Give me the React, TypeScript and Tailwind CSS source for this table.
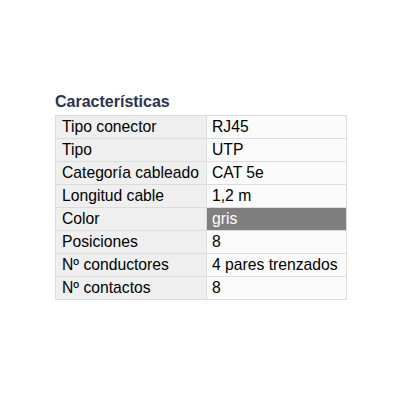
const rows: { label: string; value: string; highlight?: boolean }[] = [
  { label: 'Tipo conector', value: 'RJ45' },
  { label: 'Tipo', value: 'UTP' },
  { label: 'Categoría cableado', value: 'CAT 5e' },
  { label: 'Longitud cable', value: '1,2 m' },
  { label: 'Color', value: 'gris', highlight: true },
  { label: 'Posiciones', value: '8' },
  { label: 'Nº conductores', value: '4 pares trenzados' },
  { label: 'Nº contactos', value: '8' },
];

export default function App() {
  return (
    <div className="w-[400px] h-[400px] bg-white font-['Liberation_Sans',Arial,sans-serif]">
      <div className="pl-[55px] pt-[93px]">
        <h2 className="text-[16px] leading-[18px] font-bold text-[#2c3350] mb-[4px]">Características</h2>
        <table className="border-collapse border border-[#dcdcdc] text-[15.7px] text-black">
          <tbody>
            {rows.map((r) => (
              <tr key={r.label} className="h-[23px]">
                <td className="w-[151px] border border-[#dcdcdc] bg-[#efefef] pl-[6px] py-0 leading-[22px] whitespace-nowrap">
                  {r.label}
                </td>
                <td
                  className={`w-[140px] border border-[#dcdcdc] pl-[5px] py-0 leading-[22px] whitespace-nowrap ${
                    r.highlight ? 'bg-[#7f7f7f] text-white' : 'bg-[#fbfbfb]'
                  }`}
                >
                  {r.value}
                </td>
              </tr>
            ))}
          </tbody>
        </table>
      </div>
    </div>
  );
}
